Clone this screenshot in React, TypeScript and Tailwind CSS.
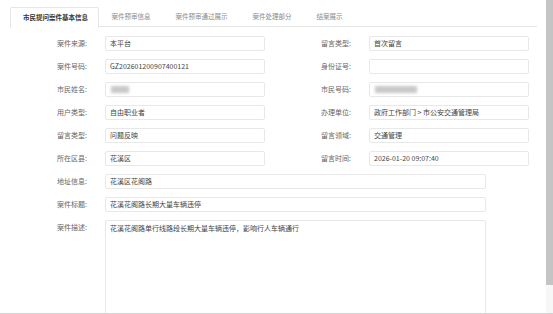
import React from "react";

const font = { fontFamily: '"Noto Sans CJK SC", "Noto Sans", sans-serif' };

function Label({ text }: { text: string }) {
  return (
    <div className="w-[105px] shrink-0 pr-[18px] text-right text-[7px] leading-[15px] text-[#666]">
      {text}:
    </div>
  );
}

function Input({ children, wide }: { children?: React.ReactNode; wide?: boolean }) {
  return (
    <div
      className={`${wide ? "w-[381px]" : "w-[160px]"} h-[15px] shrink-0 rounded-[2px] border border-[#e8e8e8] bg-white pl-[4px] text-[7px] leading-[13px] text-[#444] flex items-center`}
    >
      {children}
    </div>
  );
}

function Field({ label, value }: { label: string; value?: React.ReactNode }) {
  return (
    <div className="flex w-[264px]">
      <Label text={label} />
      <Input>{value}</Input>
    </div>
  );
}

function Blur({ w }: { w: string }) {
  return <div className={`${w} h-[7px] bg-[#c8c8c8] blur-[1.5px] ml-[1px]`} />;
}

export default function App() {
  const tabs = ["案件预审信息", "案件预审通过展示", "案件处理部分", "结案展示"];
  const rows: [string, React.ReactNode, string, React.ReactNode][] = [
    ["案件来源", "本平台", "留言类型", "首次留言"],
    ["案件号码", "GZ202601200907400121", "身份证号", ""],
    ["市民姓名", <Blur w="w-[18px]" />, "市民号码", <Blur w="w-[42px]" />],
    ["用户类型", "自由职业者", "办理单位", "政府工作部门 > 市公安交通管理局"],
    ["留言类型", "问题反映", "留言领域", "交通管理"],
    ["所在区县", "花溪区", "留言时间", "2026-01-20 09:07:40"],
  ];
  return (
    <div
      className="w-[553px] h-[314px] overflow-hidden flex bg-white border-b border-[#d4d4d4]"
      style={font}
    >
      <div className="flex-1 flex flex-col">
        <div className="mt-[7px] ml-[10px] w-[527px] h-[20px] flex border-b border-[#e6e6e6]">
          <div className="h-[21px] w-[89px] border border-b-0 border-[#e6e6e6] bg-white rounded-t-[2px] text-[6.5px] font-bold text-[#333] flex items-center justify-center pl-[2px]">
            市民提问案件基本信息
          </div>
          {tabs.map((t) => (
            <div
              key={t}
              className="h-[20px] px-[12.5px] text-[6.5px] text-[#8a8a8a] flex items-center"
            >
              {t}
            </div>
          ))}
        </div>
        <div className="mt-[9px] flex flex-col gap-[8px]">
          {rows.map((r, i) => (
            <div key={i} className="flex">
              <Field label={r[0]} value={r[1]} />
              <Field label={r[2]} value={r[3]} />
            </div>
          ))}
          <div className="flex">
            <Label text="地址信息" />
            <Input wide>花溪区花阁路</Input>
          </div>
          <div className="flex">
            <Label text="案件标题" />
            <Input wide>花溪花阁路长期大量车辆违停</Input>
          </div>
          <div className="flex">
            <Label text="案件描述" />
            <div className="w-[381px] h-[110px] rounded-[2px] border border-[#e8e8e8] pl-[4px] pt-[1px] text-[7px] leading-[13px] text-[#444]">
              花溪花阁路单行线路段长期大量车辆违停，影响行人车辆通行
            </div>
          </div>
        </div>
      </div>
      <div className="w-[7px] shrink-0 flex flex-col bg-[#f7f7f7]">
        <div className="h-[285px] bg-[#c4c4c4]" />
      </div>
    </div>
  );
}
